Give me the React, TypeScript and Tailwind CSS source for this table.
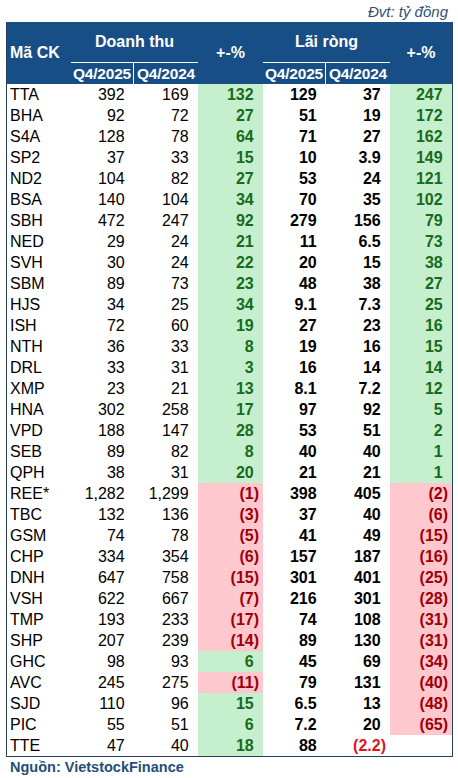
import React from "react";

type Row = [string, string, string, string, string, string, string];

const rows: Row[] = [
  ["TTA", "392", "169", "132", "129", "37", "247"],
  ["BHA", "92", "72", "27", "51", "19", "172"],
  ["S4A", "128", "78", "64", "71", "27", "162"],
  ["SP2", "37", "33", "15", "10", "3.9", "149"],
  ["ND2", "104", "82", "27", "53", "24", "121"],
  ["BSA", "140", "104", "34", "70", "35", "102"],
  ["SBH", "472", "247", "92", "279", "156", "79"],
  ["NED", "29", "24", "21", "11", "6.5", "73"],
  ["SVH", "30", "24", "22", "20", "15", "38"],
  ["SBM", "89", "73", "23", "48", "38", "27"],
  ["HJS", "34", "25", "34", "9.1", "7.3", "25"],
  ["ISH", "72", "60", "19", "27", "23", "16"],
  ["NTH", "36", "33", "8", "19", "16", "15"],
  ["DRL", "33", "31", "3", "16", "14", "14"],
  ["XMP", "23", "21", "13", "8.1", "7.2", "12"],
  ["HNA", "302", "258", "17", "97", "92", "5"],
  ["VPD", "188", "147", "28", "53", "51", "2"],
  ["SEB", "89", "82", "8", "40", "40", "1"],
  ["QPH", "38", "31", "20", "21", "21", "1"],
  ["REE*", "1,282", "1,299", "(1)", "398", "405", "(2)"],
  ["TBC", "132", "136", "(3)", "37", "40", "(6)"],
  ["GSM", "74", "78", "(5)", "41", "49", "(15)"],
  ["CHP", "334", "354", "(6)", "157", "187", "(16)"],
  ["DNH", "647", "758", "(15)", "301", "401", "(25)"],
  ["VSH", "622", "667", "(7)", "216", "301", "(28)"],
  ["TMP", "193", "233", "(17)", "74", "108", "(31)"],
  ["SHP", "207", "239", "(14)", "89", "130", "(31)"],
  ["GHC", "98", "93", "6", "45", "69", "(34)"],
  ["AVC", "245", "275", "(11)", "79", "131", "(40)"],
  ["SJD", "110", "96", "15", "6.5", "13", "(48)"],
  ["PIC", "55", "51", "6", "7.2", "20", "(65)"],
  ["TTE", "47", "40", "18", "88", "(2.2)", ""],
];

const isNeg = (v: string) => v.startsWith("(");

function Num({ v, bold, color }: { v: string; bold?: boolean; color?: string }) {
  return (
    <div
      className={`h-[21px] leading-[21px] text-right pr-[4px] whitespace-nowrap ${bold ? "font-bold" : ""} ${color ?? ""}`}
    >
      {v}
      {v !== "" && !isNeg(v) && <span className="invisible">)</span>}
    </div>
  );
}

function Pct({ v }: { v: string }) {
  if (v === "") return <div className="h-[21px] bg-white" />;
  const neg = isNeg(v);
  return (
    <div
      className={`h-[21px] leading-[21px] text-right pr-[4px] font-bold whitespace-nowrap ${neg ? "bg-[#ffc7ce] text-[#9c0006]" : "bg-[#c6efce] text-[#176b1c]"}`}
    >
      {v}
      {!neg && <span className="invisible">)</span>}
    </div>
  );
}

export default function App() {
  return (
    <div
      className="w-[458px] h-[778px] bg-white text-black flex flex-col"
      style={{ fontFamily: '"Liberation Sans", Arial, sans-serif' }}
    >
      <div className="h-[22px] flex items-center justify-end pr-[10px] text-[15px] italic text-[#34506f] leading-none">
        Đvt: tỷ đồng
      </div>
      <div className="ml-[6px] w-[447px] border-x border-b border-[#27405c]">
        {/* header */}
        <div className="grid grid-cols-[64px_63px_64px_65px_63px_64px_62px] grid-rows-[41px_21px] bg-[#174e85] text-white font-bold text-[16px]">
          <div className="row-span-2 flex items-center pl-[3px]">Mã CK</div>
          <div className="col-span-2 flex items-center justify-center border-b border-white">Doanh thu</div>
          <div className="row-span-2 flex items-center justify-center">+-%</div>
          <div className="col-span-2 flex items-center justify-center border-b border-white">Lãi ròng</div>
          <div className="row-span-2 flex items-center justify-center">+-%</div>
          <div className="flex items-center justify-center text-[15.5px] tracking-[-0.2px] border-r border-white">Q4/2025</div>
          <div className="flex items-center justify-center text-[15.5px] tracking-[-0.2px]">Q4/2024</div>
          <div className="flex items-center justify-center text-[15.5px] tracking-[-0.2px] border-r border-white">Q4/2025</div>
          <div className="flex items-center justify-center text-[15.5px] tracking-[-0.2px]">Q4/2024</div>
        </div>
        {/* body */}
        <div className="grid grid-cols-[64px_63px_64px_65px_63px_64px_62px] text-[16px]">
          {rows.map((r) => (
            <React.Fragment key={r[0]}>
              <div className="h-[21px] leading-[21px] pl-[3px]">{r[0]}</div>
              <Num v={r[1]} />
              <Num v={r[2]} />
              <Pct v={r[3]} />
              <Num v={r[4]} bold />
              <Num v={r[5]} bold color={isNeg(r[5]) ? "text-[#e0161e]" : ""} />
              <Pct v={r[6]} />
            </React.Fragment>
          ))}
        </div>
      </div>
      <div className="flex-1 flex items-center pl-[10px] text-[14.5px] font-bold text-[#1f4e79] leading-none">
        Nguồn: VietstockFinance
      </div>
    </div>
  );
}
